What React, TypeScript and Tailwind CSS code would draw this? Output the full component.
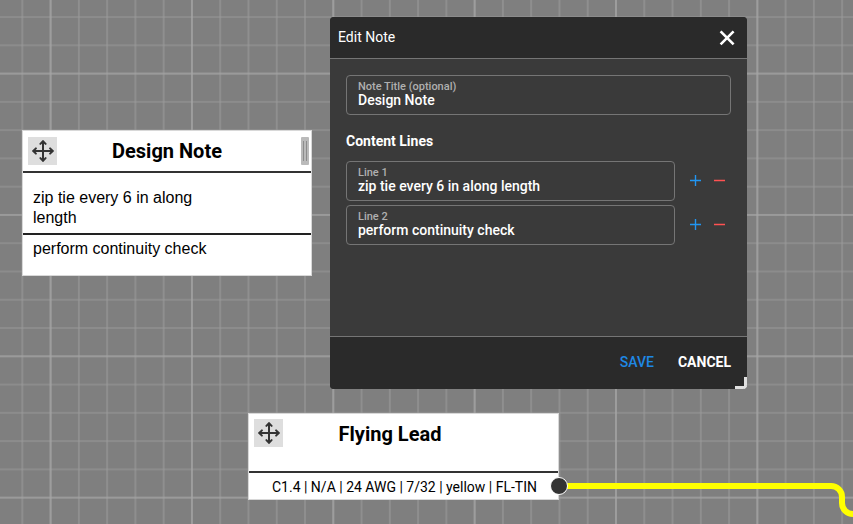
import { useState } from 'react';

const FIELD = 'relative block h-10 rounded border border-[#757575] focus-within:border-[#2196f3]';
const LABEL = 'absolute left-[11px] top-1 text-[11px] leading-[14px] font-medium text-[#b0b0b0]';
const INPUT = 'h-full w-full bg-transparent pl-[11px] pr-3 pt-2.5 text-[14px] font-medium text-white outline-none';

function Grid() {
  return (
    <svg className="absolute inset-0 h-full w-full" aria-hidden="true">
      <defs>
        <pattern id="minor" x="50.6" y="73.6" width="28.27" height="28.27" patternUnits="userSpaceOnUse">
          <path d="M0 0H28.27M0 0V28.27M28.27 0V28.27M0 28.27H28.27" stroke="#9a9a9a" strokeWidth="1.1" fill="none" />
        </pattern>
        <pattern id="major" x="50.6" y="73.6" width="141.35" height="141.35" patternUnits="userSpaceOnUse">
          <path d="M0 0H141.35M0 0V141.35M141.35 0V141.35M0 141.35H141.35" stroke="#a8a8a8" strokeWidth="1.1" fill="none" />
        </pattern>
      </defs>
      <rect width="100%" height="100%" fill="url(#minor)" />
      <rect width="100%" height="100%" fill="url(#major)" />
    </svg>
  );
}

function MoveHandle() {
  return (
    <button type="button" aria-label="Move" className="flex h-7 w-[29px] shrink-0 cursor-move items-center justify-center bg-[#dedede]">
      <svg width="22" height="22" viewBox="0 0 22 22" fill="none" stroke="#333" strokeWidth="2" strokeLinecap="round" strokeLinejoin="round">
        <path d="M11 1.5V20.5M1.5 11H20.5" />
        <path d="M8.4 3.9L11 1.3L13.6 3.9M8.4 18.1L11 20.7L13.6 18.1M3.9 8.4L1.3 11L3.9 13.6M18.1 8.4L20.7 11L18.1 13.6" />
      </svg>
    </button>
  );
}

function NoteNode({ title, lines }: { title: string; lines: string[] }) {
  return (
    <section className="absolute left-[22px] top-[130px] w-[290px] border border-[#d8d8d8] bg-white text-black">
      <header className="flex h-[42px] items-center border-b-2 border-[#333] pl-[5px] pr-0.5">
        <MoveHandle />
        <h2 className="flex-1 pr-6 text-center text-[20px] font-bold">{title}</h2>
        <div className="flex h-7 w-2 justify-center gap-0.5 rounded-[1px] bg-[#bababa] py-1">
          <span className="w-px bg-[#8c8c8c]" />
          <span className="w-px bg-[#8c8c8c]" />
        </div>
      </header>
      <div className="font-['Liberation_Sans',Arial,sans-serif] text-[16px] leading-5">
        <p className="border-b-2 border-[#222] pb-[5px] pl-2.5 pr-[100px] pt-[15px]">{lines[0]}</p>
        <p className="px-2.5 pb-4 pt-1">{lines[1]}</p>
      </div>
    </section>
  );
}

function LeadNode() {
  return (
    <section className="absolute left-[248px] top-[413px] w-[311px] border border-[#d8d8d8] bg-white text-black">
      <header className="flex h-[59px] items-start border-b-2 border-[#333] px-[5px] pt-[5px]">
        <MoveHandle />
        <h2 className="flex-1 pr-14 text-center text-[20px] leading-[30px] font-bold">Flying Lead</h2>
      </header>
      <p className="pr-[21px] pt-0.5 text-right text-[14px] leading-6">C1.4 | N/A | 24 AWG | 7/32 | yellow | FL-TIN</p>
    </section>
  );
}

export default function App() {
  const [title, setTitle] = useState('Design Note');
  const [lines, setLines] = useState(['zip tie every 6 in along length', 'perform continuity check']);

  const setLine = (index: number, value: string) => setLines(lines.map((l, i) => (i === index ? value : l)));
  const addLine = (index: number) => setLines([...lines.slice(0, index + 1), '', ...lines.slice(index + 1)]);
  const removeLine = (index: number) => setLines(lines.filter((_, i) => i !== index));

  return (
    <main className="relative min-h-screen overflow-hidden bg-[#7f7f7f] font-[Roboto,sans-serif]">
      <Grid />
      <NoteNode title="Design Note" lines={['zip tie every 6 in along length', 'perform continuity check']} />
      <LeadNode />

      {/* cable */}
      <svg className="pointer-events-none absolute inset-0 h-full w-full" aria-hidden="true">
        <path d="M559 486H831A11 11 0 0 1 842 497V503A11 11 0 0 0 853 514H2000" fill="none" stroke="#ff0" strokeWidth="6" />
        <circle cx="559" cy="486" r="8.5" fill="#333" stroke="#fff" strokeWidth="1" />
      </svg>

      <form
        role="dialog"
        aria-labelledby="dialog-title"
        onSubmit={e => e.preventDefault()}
        className="absolute left-[330px] top-[17px] w-[417px] overflow-hidden rounded bg-[#3a3a3a] text-white"
      >
        <header className="flex h-[42px] items-center justify-between border-b border-[#757575] bg-[#2a2a2a] pl-2 pr-3">
          <h1 id="dialog-title" className="text-[14px]">Edit Note</h1>
          <button type="button" aria-label="Close">
            <svg width="16" height="16" viewBox="0 0 16 16" stroke="#fff" strokeWidth="2.6">
              <path d="M1.6 1.4L14.6 14.4M14.6 1.4L1.6 14.4" />
            </svg>
          </button>
        </header>

        <div className="min-h-[277px] px-4 pt-4">
          <div className={FIELD}>
            <label htmlFor="note-title" className={LABEL}>Note Title (optional)</label>
            <input id="note-title" value={title} onChange={e => setTitle(e.target.value)} className={INPUT} />
          </div>
          <h2 className="mb-2.5 mt-4 text-[14px] leading-5 font-bold">Content Lines</h2>
          <div className="space-y-1">
            {lines.map((line, i) => (
              <div key={i} className="flex items-center">
                <div className={FIELD + ' flex-1'}>
                  <label htmlFor={`line-${i}`} className={LABEL}>Line {i + 1}</label>
                  <input id={`line-${i}`} value={line} onChange={e => setLine(i, e.target.value)} className={INPUT} />
                </div>
                <div className="flex gap-3 pl-[15px] pr-[5px]">
                  <button type="button" aria-label="Add line" onClick={() => addLine(i)}>
                    <svg width="12" height="12" viewBox="0 0 12 12" stroke="#2196f3" strokeWidth="1.4">
                      <path d="M0 5.5H11M5.5 0V11" />
                    </svg>
                  </button>
                  <button type="button" aria-label="Remove line" onClick={() => removeLine(i)}>
                    <svg width="12" height="12" viewBox="0 0 12 12" stroke="#ff5252" strokeWidth="1.4">
                      <path d="M0 5.5H11" />
                    </svg>
                  </button>
                </div>
              </div>
            ))}
          </div>
        </div>

        <footer className="flex h-[53px] items-center justify-end gap-6 border-t border-[#757575] bg-[#2a2a2a] pb-px pr-4 text-[14px]">
          <button type="submit" className="font-medium text-[#1e88e5]">SAVE</button>
          <button type="button" className="font-bold">CANCEL</button>
        </footer>
        <span className="absolute bottom-0 right-0 h-3 w-3 border-b-3 border-r-3 border-[#e0e0e0]" />
      </form>
    </main>
  );
}
